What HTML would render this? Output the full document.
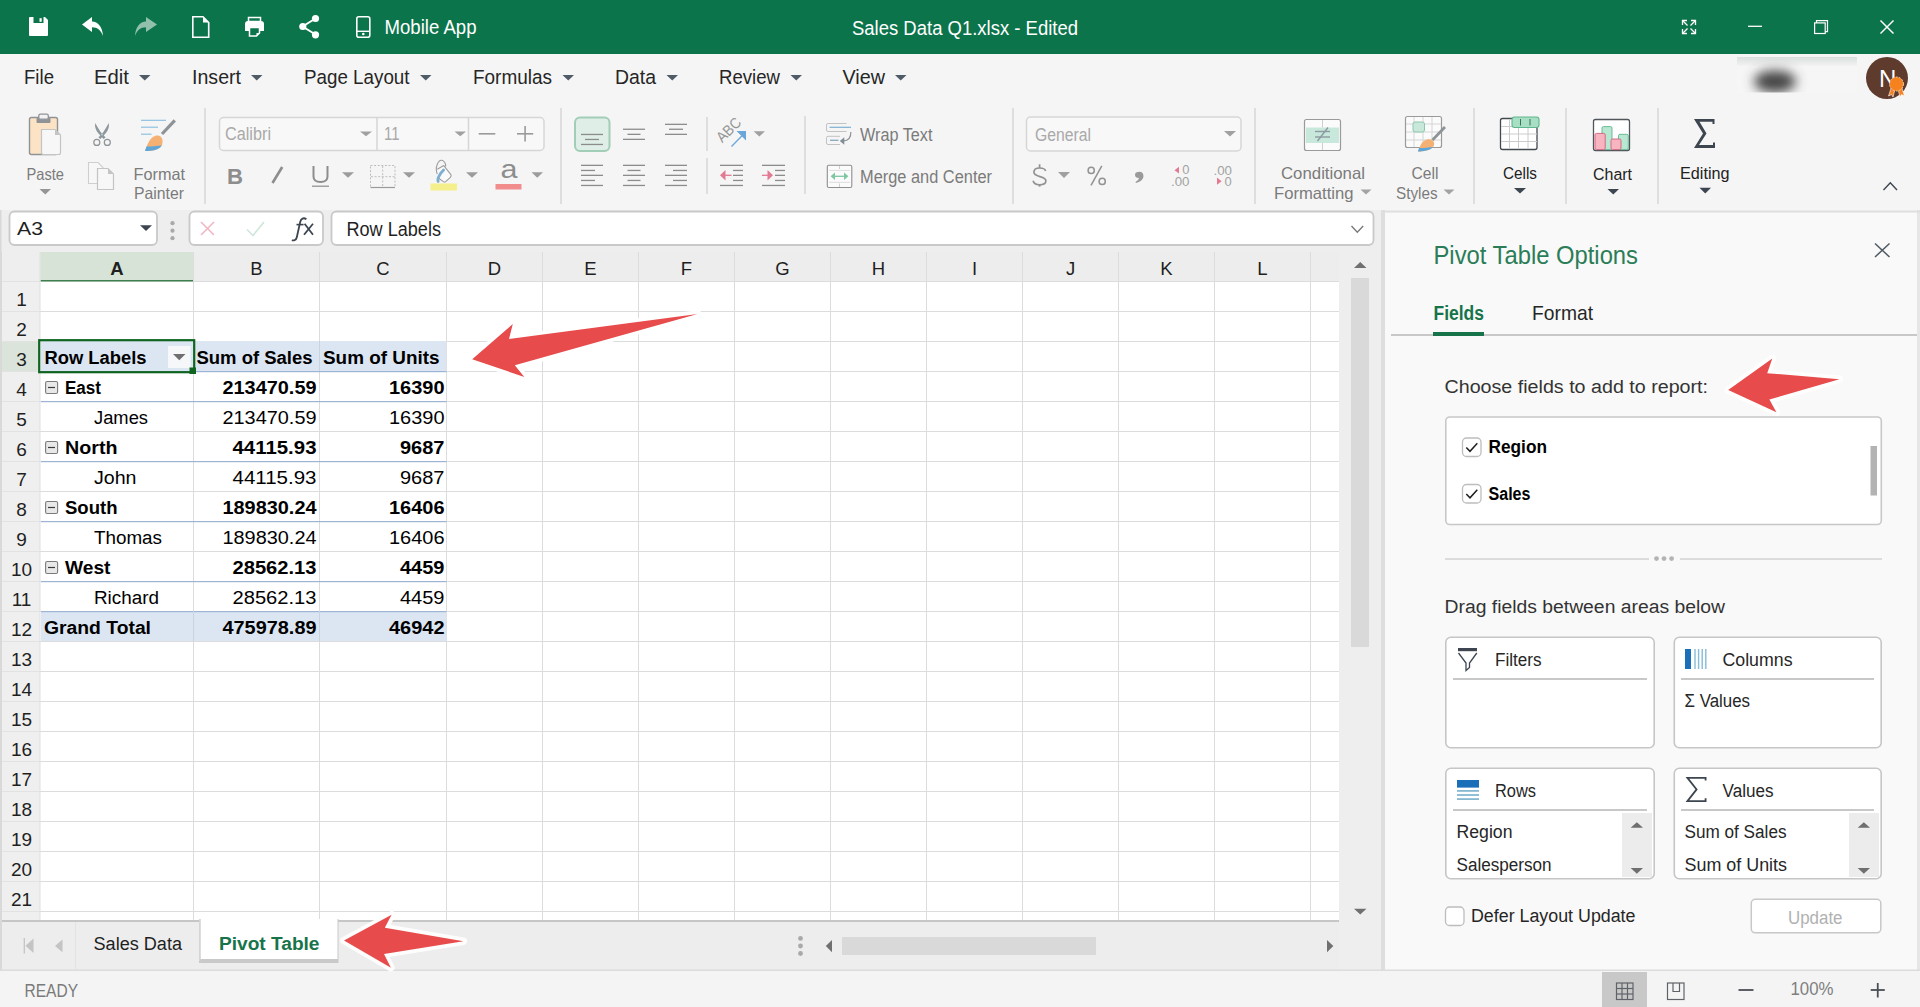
<!DOCTYPE html>
<html><head><meta charset="utf-8"><title>Sales Data Q1.xlsx - Edited</title>
<style>html,body{margin:0;padding:0;width:1920px;height:1007px;overflow:hidden;background:#f3f3f3}svg{display:block}</style>
</head><body>
<svg width="1920" height="1007" viewBox="0 0 1920 1007">
<defs><filter id="blur5" x="-50%" y="-80%" width="200%" height="260%"><feGaussianBlur stdDeviation="6"/></filter><linearGradient id="topstrip" x1="0" y1="0" x2="0" y2="1"><stop offset="0" stop-color="#d9e0dc"/><stop offset="1" stop-color="#f3f3f3"/></linearGradient><clipPath id="blobclip"><rect x="1737" y="57" width="120" height="35.5"/></clipPath></defs>
<rect x="0" y="0" width="1920" height="54" fill="#0c744b" />
<rect x="0" y="54" width="1920" height="156" fill="#f5f5f5" />
<rect x="0" y="210" width="1381" height="42" fill="#eeeeee" />
<rect x="0" y="252" width="1381" height="719" fill="#eeeeee" />
<rect x="0" y="971" width="1920" height="36" fill="#f4f4f4" />
<path d="M29,18 Q29,17 30,17 H45 L48,20 V35 Q48,36 47,36 H30 Q29,36 29,35 Z" fill="#ffffff" />
<rect x="33.5" y="17" width="10" height="6" fill="#0c744b" />
<rect x="39.5" y="18.2" width="2.2" height="3.6" fill="#ffffff" />
<path d="M92,17 L82,24.5 L92,32 V27.3 C97.5,27.3 101,30.5 103,36 C102.6,27 98,21.8 92,21.6 Z" fill="#ffffff" />
<path d="M146,17 L157,24.5 L146,32 V27.3 C140.5,27.3 137,30.5 135,36 C135.4,27 140,21.8 146,21.6 Z" fill="#ffffff" opacity="0.55"/>
<path d="M192.8,16.8 H203 L208.7,22.5 V37.2 H192.8 Z" fill="none" stroke="#ffffff" stroke-width="1.6" />
<path d="M203,16.8 V22.5 H208.7 Z" fill="#ffffff" />
<rect x="248.5" y="17.5" width="12" height="4" fill="none" stroke="#ffffff" stroke-width="1.5" />
<path d="M245,24 Q245,21 248,21 H261 Q264,21 264,24 V31 H260 V27 H249 V31 H245 Z" fill="#ffffff" />
<path d="M249.5,27.5 H259.5 V33 L256.5,36 H249.5 Z" fill="none" stroke="#ffffff" stroke-width="1.5" />
<path d="M259.5,33 H256.5 V36 Z" fill="#ffffff" />
<line x1="302.5" y1="26.5" x2="315.5" y2="18.5" stroke="#ffffff" stroke-width="2" />
<line x1="302.5" y1="26.5" x2="315.5" y2="34.5" stroke="#ffffff" stroke-width="2" />
<circle cx="315.5" cy="18.5" r="3.6" fill="#ffffff" />
<circle cx="302.8" cy="26.5" r="3.6" fill="#ffffff" />
<circle cx="315.5" cy="34.8" r="3.6" fill="#ffffff" />
<rect x="356.8" y="16.8" width="13" height="20.5" fill="none" rx="2" stroke="#ffffff" stroke-width="1.6" />
<circle cx="363.3" cy="34" r="1.3" fill="#ffffff" />
<line x1="357" y1="31.3" x2="370" y2="31.3" stroke="#ffffff" stroke-width="1.4" />
<text x="384.5" y="34.2" font-size="19.3" font-family="Liberation Sans" fill="#ffffff" textLength="92" lengthAdjust="spacingAndGlyphs" text-anchor="start" >Mobile App</text>
<text x="852" y="34.5" font-size="19.4" font-family="Liberation Sans" fill="#ffffff" textLength="226" lengthAdjust="spacingAndGlyphs" text-anchor="start" >Sales Data Q1.xlsx - Edited</text>
<line x1="1682.5" y1="20.5" x2="1687.5" y2="25.5" stroke="#ffffff" stroke-width="1.3" />
<path d="M1687.0,20.5 H1682.5 V25.0" fill="none" stroke="#ffffff" stroke-width="1.3" />
<line x1="1695.5" y1="20.5" x2="1690.5" y2="25.5" stroke="#ffffff" stroke-width="1.3" />
<path d="M1691.0,20.5 H1695.5 V25.0" fill="none" stroke="#ffffff" stroke-width="1.3" />
<line x1="1682.5" y1="33.5" x2="1687.5" y2="28.5" stroke="#ffffff" stroke-width="1.3" />
<path d="M1687.0,33.5 H1682.5 V29.0" fill="none" stroke="#ffffff" stroke-width="1.3" />
<line x1="1695.5" y1="33.5" x2="1690.5" y2="28.5" stroke="#ffffff" stroke-width="1.3" />
<path d="M1691.0,33.5 H1695.5 V29.0" fill="none" stroke="#ffffff" stroke-width="1.3" />
<line x1="1748" y1="26.3" x2="1762" y2="26.3" stroke="#ffffff" stroke-width="1.3" />
<rect x="1814.6" y="22.9" width="10.6" height="10.6" fill="none" stroke="#ffffff" stroke-width="1.2" />
<path d="M1816.5,22.9 V20.6 H1827.5 V31.6 H1825.2" fill="none" stroke="#ffffff" stroke-width="1.2" />
<line x1="1880.5" y1="20.5" x2="1893.5" y2="33.5" stroke="#ffffff" stroke-width="1.5" />
<line x1="1893.5" y1="20.5" x2="1880.5" y2="33.5" stroke="#ffffff" stroke-width="1.5" />
<text x="24" y="84" font-size="19.3" font-family="Liberation Sans" fill="#262626" textLength="30" lengthAdjust="spacingAndGlyphs" text-anchor="start" >File</text>
<text x="94" y="84" font-size="19.3" font-family="Liberation Sans" fill="#262626" textLength="35" lengthAdjust="spacingAndGlyphs" text-anchor="start" >Edit</text>
<path d="M139,75H150.5L144.75,80.6Z" fill="#4f5b66" />
<text x="192" y="84" font-size="19.3" font-family="Liberation Sans" fill="#262626" textLength="49" lengthAdjust="spacingAndGlyphs" text-anchor="start" >Insert</text>
<path d="M251,75H262.5L256.75,80.6Z" fill="#4f5b66" />
<text x="304" y="84" font-size="19.3" font-family="Liberation Sans" fill="#262626" textLength="105.5" lengthAdjust="spacingAndGlyphs" text-anchor="start" >Page Layout</text>
<path d="M420,75H431.5L425.75,80.6Z" fill="#4f5b66" />
<text x="473" y="84" font-size="19.3" font-family="Liberation Sans" fill="#262626" textLength="79" lengthAdjust="spacingAndGlyphs" text-anchor="start" >Formulas</text>
<path d="M562.5,75H574.0L568.25,80.6Z" fill="#4f5b66" />
<text x="615" y="84" font-size="19.3" font-family="Liberation Sans" fill="#262626" textLength="41" lengthAdjust="spacingAndGlyphs" text-anchor="start" >Data</text>
<path d="M666.5,75H678.0L672.25,80.6Z" fill="#4f5b66" />
<text x="719" y="84" font-size="19.3" font-family="Liberation Sans" fill="#262626" textLength="61" lengthAdjust="spacingAndGlyphs" text-anchor="start" >Review</text>
<path d="M790.5,75H802.0L796.25,80.6Z" fill="#4f5b66" />
<text x="842.5" y="84" font-size="19.3" font-family="Liberation Sans" fill="#262626" textLength="42.5" lengthAdjust="spacingAndGlyphs" text-anchor="start" >View</text>
<path d="M895,75H906.5L900.75,80.6Z" fill="#4f5b66" />
<rect x="1737" y="57" width="120" height="9" fill="url(#topstrip)" />
<rect x="1737" y="66" width="120" height="27" fill="#f6f6f6" />
<g clip-path="url(#blobclip)"><ellipse cx="1775" cy="81.5" rx="21" ry="11" fill="#444444" filter="url(#blur5)"/></g>
<circle cx="1887" cy="78" r="21" fill="#5e3b2d" />
<text x="1879" y="86.6" font-size="24" font-family="Liberation Sans" fill="#ffffff" text-anchor="start" >N</text>
<g transform="translate(1896.5,84)"><path d="M-5,3 L-8,12 L-5,10.5 L-3.5,13 L-1.5,5 Z M5,3 L8,12 L5,10.5 L3.5,13 L1.5,5 Z" fill="#f5821f" stroke="#fff" stroke-width="0.6"/><circle cx="0" cy="0" r="7" fill="#f5821f" stroke="#fde3c8" stroke-width="0.8" stroke-dasharray="2 1.2"/></g>
<rect x="29.5" y="117.5" width="28" height="37" fill="#fde3c5" rx="2" stroke="#8f9396" stroke-width="1.4" />
<rect x="36.5" y="118" width="14" height="5" fill="#8f9396" rx="1" />
<rect x="38.8" y="114.2" width="9.5" height="5" fill="#f3f3f3" rx="1.5" stroke="#8f9396" stroke-width="1.3" />
<path d="M41.5,129.5 H55 L60.5,135 V152.5 Q60.5,154.5 58.5,154.5 H43.5 Q41.5,154.5 41.5,152.5 Z" fill="#f7f7f7" stroke="#c4c4c4" stroke-width="1.2" />
<path d="M55,129.5 V135 H60.5 Z" fill="#c4c4c4" />
<text x="26.5" y="180" font-size="16.5" font-family="Liberation Sans" fill="#7b7b7b" textLength="37.5" lengthAdjust="spacingAndGlyphs" text-anchor="start" >Paste</text>
<path d="M39.5,189H51L45.25,194.6Z" fill="#959595" />
<path d="M95.2,123 Q94.3,128.5 98.3,133.3 L103.6,139 L105.6,137.4 L100.6,132 Q97.4,127 95.2,123 Z" fill="#8e979b" />
<path d="M108.8,123 Q109.7,128.5 105.7,133.3 L100.4,139 L98.4,137.4 L103.4,132 Q106.6,127 108.8,123 Z" fill="#8e979b" />
<circle cx="96.8" cy="142.4" r="3" fill="none" stroke="#8e9397" stroke-width="1.2" />
<circle cx="107.3" cy="142.4" r="3" fill="none" stroke="#8e9397" stroke-width="1.2" />
<circle cx="102" cy="134.6" r="1" fill="#b0cdd6" />
<path d="M88.5,162.5 H98 L103,167.5 V183.5 H88.5 Z" fill="#f7f7f7" stroke="#cfcfcf" stroke-width="1.1" />
<path d="M97.5,168.5 H108 L113.5,174 V189.5 H97.5 Z" fill="#f7f7f7" stroke="#c4c4c4" stroke-width="1.2" />
<path d="M108,168.5 V174 H113.5 Z" fill="#c4c4c4" />
<line x1="141" y1="120.3" x2="166" y2="120.3" stroke="#85bde0" stroke-width="1.1" />
<line x1="141" y1="127.2" x2="158" y2="127.2" stroke="#85bde0" stroke-width="1.1" />
<line x1="141" y1="134.2" x2="151.5" y2="134.2" stroke="#85bde0" stroke-width="1.1" />
<line x1="174.8" y1="120.3" x2="162" y2="134" stroke="#8e9397" stroke-width="3.2" />
<path d="M155,136 C161,134 164,139 162,145 C160,150 152,151 145,151 C147,146 149,138 155,136 Z" fill="#f5b173" />
<path d="M146.5,146.5 C151,146.5 157,146 161.8,145.5 C159,150 152,151 145,151 Z" fill="#5ea5d8" />
<text x="133.5" y="180" font-size="16.5" font-family="Liberation Sans" fill="#7b7b7b" textLength="51.5" lengthAdjust="spacingAndGlyphs" text-anchor="start" >Format</text>
<text x="134" y="199" font-size="16.5" font-family="Liberation Sans" fill="#7b7b7b" textLength="50" lengthAdjust="spacingAndGlyphs" text-anchor="start" >Painter</text>
<rect x="204.25" y="108" width="1.5" height="96" fill="#d6d6d6" />
<rect x="219.5" y="117.5" width="324.5" height="33" fill="#f8f8f8" rx="4" stroke="#d6d6d6" stroke-width="1.5" />
<line x1="377" y1="118" x2="377" y2="150" stroke="#d6d6d6" stroke-width="1.5" />
<line x1="468.5" y1="118" x2="468.5" y2="150" stroke="#d6d6d6" stroke-width="1.5" />
<text x="225" y="140" font-size="17.5" font-family="Liberation Sans" fill="#a9a9a9" textLength="46" lengthAdjust="spacingAndGlyphs" text-anchor="start" >Calibri</text>
<path d="M360,131.4H372L366.0,136.2Z" fill="#a0a0a0" />
<text x="384" y="140" font-size="17.5" font-family="Liberation Sans" fill="#a9a9a9" textLength="15.5" lengthAdjust="spacingAndGlyphs" text-anchor="start" >11</text>
<path d="M454.5,131.4H466L460.25,136.2Z" fill="#a0a0a0" />
<line x1="478.7" y1="133.8" x2="495.3" y2="133.8" stroke="#9a9a9a" stroke-width="1.6" />
<line x1="517" y1="133.8" x2="533.2" y2="133.8" stroke="#9a9a9a" stroke-width="1.6" />
<line x1="525.1" y1="126" x2="525.1" y2="141.6" stroke="#9a9a9a" stroke-width="1.6" />
<text x="227" y="184" font-size="22" font-family="Liberation Sans" fill="#8d8d8d" font-weight="bold" textLength="16" lengthAdjust="spacingAndGlyphs" text-anchor="start" >B</text>
<line x1="282.2" y1="167" x2="272.5" y2="183" stroke="#8d8d8d" stroke-width="2.6" />
<path d="M313.5,166 V176.5 Q313.5,182 320.5,182 Q327.5,182 327.5,176.5 V166" fill="none" stroke="#8d8d8d" stroke-width="2" />
<line x1="312" y1="186.2" x2="329" y2="186.2" stroke="#8d8d8d" stroke-width="1.2" />
<path d="M342,172.2H354L348.0,177.8Z" fill="#9c9c9c" />
<rect x="370.5" y="165.5" width="24.5" height="22" fill="none" stroke="#bdbdbd" stroke-width="1" stroke-dasharray="2 1.6"/>
<line x1="382.7" y1="166" x2="382.7" y2="187" stroke="#bdbdbd" stroke-width="1" stroke-dasharray="2 1.6"/>
<line x1="371" y1="176.7" x2="395" y2="176.7" stroke="#bdbdbd" stroke-width="1" stroke-dasharray="2 1.6"/>
<line x1="370.5" y1="187.5" x2="395" y2="187.5" stroke="#9a9a9a" stroke-width="1.2" />
<path d="M403,172.2H415L409.0,177.8Z" fill="#9c9c9c" />
<path d="M437.3,174 C434.5,167 438.5,159.5 442,160.3 C444.5,161 446,164 445.6,166.5" fill="none" stroke="#9d9d9d" stroke-width="1.1" />
<path d="M437.3,169.3 L443.8,165.6 L450.9,174.6 Q451.6,176 450.4,177.3 L445.6,181.6 Q444.6,182.4 443.4,181.6 L438.6,178.2" fill="#fafafa" stroke="#9d9d9d" stroke-width="1.1" stroke-linejoin="round"/>
<path d="M443.6,170 Q440,173.5 438.6,177 Q437.4,180.3 438.2,181.4" fill="none" stroke="#7eaed0" stroke-width="2.8" stroke-linecap="round"/>
<rect x="430.5" y="183.5" width="26.5" height="7" fill="#f5ef8c" />
<path d="M466,172.2H478L472.0,177.8Z" fill="#9c9c9c" />
<text x="500.5" y="178" font-size="26" font-family="Liberation Sans" fill="#8d8d8d" textLength="17" lengthAdjust="spacingAndGlyphs" text-anchor="start" >a</text>
<rect x="495.5" y="184" width="26" height="5.5" fill="#f18d8d" />
<path d="M531.5,172.2H543L537.25,177.8Z" fill="#9c9c9c" />
<rect x="560.25" y="108" width="1.5" height="96" fill="#d6d6d6" />
<rect x="575" y="117.5" width="34.5" height="33.5" fill="#dfeee6" rx="5" stroke="#a2cdb6" stroke-width="2" />
<rect x="581" y="133.8" width="22" height="1.3" fill="#8c8c8c" />
<rect x="585" y="138.8" width="14" height="1.3" fill="#8c8c8c" />
<rect x="581" y="143.8" width="22" height="1.3" fill="#8c8c8c" />
<rect x="623" y="128.6" width="22" height="1.3" fill="#8c8c8c" />
<rect x="627.5" y="133.70000000000002" width="13.0" height="1.3" fill="#8c8c8c" />
<rect x="623" y="138.70000000000002" width="22" height="1.3" fill="#8c8c8c" />
<rect x="665" y="123.7" width="22" height="1.3" fill="#8c8c8c" />
<rect x="669" y="128.6" width="14" height="1.3" fill="#8c8c8c" />
<rect x="665" y="133.70000000000002" width="22" height="1.3" fill="#8c8c8c" />
<rect x="581" y="164.70000000000002" width="22" height="1.3" fill="#8c8c8c" />
<rect x="623" y="164.70000000000002" width="22" height="1.3" fill="#8c8c8c" />
<rect x="665" y="164.70000000000002" width="22" height="1.3" fill="#8c8c8c" />
<rect x="581" y="169.8" width="14" height="1.3" fill="#8c8c8c" />
<rect x="627.5" y="169.8" width="13.0" height="1.3" fill="#8c8c8c" />
<rect x="673" y="169.8" width="14" height="1.3" fill="#8c8c8c" />
<rect x="581" y="174.70000000000002" width="22" height="1.3" fill="#8c8c8c" />
<rect x="623" y="174.70000000000002" width="22" height="1.3" fill="#8c8c8c" />
<rect x="665" y="174.70000000000002" width="22" height="1.3" fill="#8c8c8c" />
<rect x="581" y="179.8" width="14" height="1.3" fill="#8c8c8c" />
<rect x="627.5" y="179.8" width="13.0" height="1.3" fill="#8c8c8c" />
<rect x="673" y="179.8" width="14" height="1.3" fill="#8c8c8c" />
<rect x="581" y="184.8" width="22" height="1.3" fill="#8c8c8c" />
<rect x="623" y="184.8" width="22" height="1.3" fill="#8c8c8c" />
<rect x="665" y="184.8" width="22" height="1.3" fill="#8c8c8c" />
<rect x="706.25" y="117" width="1.5" height="34" fill="#d6d6d6" />
<rect x="706.25" y="158" width="1.5" height="36" fill="#d6d6d6" />
<text x="0" y="0" font-size="15" font-family="Liberation Sans" fill="#959595" transform="translate(722.3,143.3) rotate(-45)" textLength="28" lengthAdjust="spacingAndGlyphs">ABC</text>
<line x1="731.5" y1="146.5" x2="744" y2="133.8" stroke="#6aa7d8" stroke-width="1.3" />
<path d="M736.5,131 H746 V140.5 Z" fill="#6aa7d8" />
<path d="M753.6,131.2H765L759.3,136.5Z" fill="#a0a0a0" />
<rect x="720" y="164.70000000000002" width="23" height="1.3" fill="#8c8c8c" />
<rect x="720" y="184.8" width="23" height="1.3" fill="#8c8c8c" />
<rect x="733" y="169.8" width="10" height="1.3" fill="#8c8c8c" />
<rect x="733" y="174.70000000000002" width="10" height="1.3" fill="#8c8c8c" />
<rect x="733" y="179.8" width="10" height="1.3" fill="#8c8c8c" />
<rect x="762" y="164.70000000000002" width="23" height="1.3" fill="#8c8c8c" />
<rect x="762" y="184.8" width="23" height="1.3" fill="#8c8c8c" />
<rect x="775" y="169.8" width="10" height="1.3" fill="#8c8c8c" />
<rect x="775" y="174.70000000000002" width="10" height="1.3" fill="#8c8c8c" />
<rect x="775" y="179.8" width="10" height="1.3" fill="#8c8c8c" />
<path d="M720,175.3 L725.5,170 V180.6 Z" fill="#e27a93" />
<line x1="724" y1="175.3" x2="731.5" y2="175.3" stroke="#e27a93" stroke-width="1.3" />
<path d="M773,175.3 L767.5,170 V180.6 Z" fill="#e27a93" />
<line x1="762" y1="175.3" x2="769" y2="175.3" stroke="#e27a93" stroke-width="1.3" />
<rect x="804.25" y="116" width="1.5" height="78" fill="#d6d6d6" />
<path d="M846.5,123.5 H828 Q826.5,123.5 826.5,125 V130 Q826.5,131.5 828,131.5 H846.5" fill="none" stroke="#c2c2c2" stroke-width="1" />
<line x1="829.5" y1="127.3" x2="851" y2="127.3" stroke="#7fb0d3" stroke-width="1.2" />
<path d="M840,136.3 H828 Q826.5,136.3 826.5,137.8 V143 Q826.5,144.5 828,144.5 H840" fill="none" stroke="#c2c2c2" stroke-width="1" />
<line x1="830" y1="140.3" x2="838.5" y2="140.3" stroke="#86a9bf" stroke-width="1.3" />
<path d="M850.8,132 Q851.2,140.5 843.2,141" fill="none" stroke="#8e9397" stroke-width="1.2" />
<path d="M844.3,137.3 L839.8,141 L844.3,144.8 Z" fill="#7f8d97" />
<text x="860" y="141.2" font-size="17.5" font-family="Liberation Sans" fill="#7b7b7b" textLength="72.5" lengthAdjust="spacingAndGlyphs" text-anchor="start" >Wrap Text</text>
<rect x="827.3" y="165.3" width="24.5" height="22.2" fill="#fbfbfb" rx="1.5" stroke="#8f8f8f" stroke-width="1.1" />
<line x1="829" y1="170.4" x2="850" y2="170.4" stroke="#dedede" stroke-width="1" />
<line x1="829" y1="182.3" x2="850" y2="182.3" stroke="#dedede" stroke-width="1" />
<line x1="839.5" y1="166" x2="839.5" y2="169" stroke="#d0d0d0" stroke-width="1" />
<line x1="839.5" y1="183.5" x2="839.5" y2="187" stroke="#d0d0d0" stroke-width="1" />
<line x1="833" y1="176.3" x2="846" y2="176.3" stroke="#7fc6a2" stroke-width="1.3" />
<path d="M830.6,176.3 L835,172.6 V180 Z" fill="#7fc6a2" />
<path d="M848.4,176.3 L844,172.6 V180 Z" fill="#7fc6a2" />
<text x="860" y="183.2" font-size="17.5" font-family="Liberation Sans" fill="#7b7b7b" textLength="132" lengthAdjust="spacingAndGlyphs" text-anchor="start" >Merge and Center</text>
<rect x="1012.25" y="108" width="1.5" height="96" fill="#d6d6d6" />
<rect x="1026.5" y="117" width="214.5" height="34" fill="#f8f8f8" rx="4" stroke="#d6d6d6" stroke-width="1.5" />
<text x="1035" y="141.2" font-size="17.5" font-family="Liberation Sans" fill="#a9a9a9" textLength="56" lengthAdjust="spacingAndGlyphs" text-anchor="start" >General</text>
<path d="M1224,131H1236L1230.0,136.4Z" fill="#a0a0a0" />
<path d="M1045.6,171 C1045.1,168.9 1042.9,168 1039.6,168 C1036.1,168 1033.9,169.8 1033.9,172.3 C1033.9,177.4 1045.9,175.8 1045.9,180.8 C1045.9,183.3 1043.5,184.8 1039.6,184.8 C1036.1,184.8 1033.7,183.3 1033.1,180.8" fill="none" stroke="#929292" stroke-width="1.7" />
<line x1="1039.6" y1="164.3" x2="1039.6" y2="168" stroke="#929292" stroke-width="1.7" />
<line x1="1039.6" y1="184.8" x2="1039.6" y2="186.7" stroke="#929292" stroke-width="1.7" />
<path d="M1058,172H1070L1064.0,177.9Z" fill="#a0a0a0" />
<circle cx="1091.2" cy="170.4" r="3.1" fill="none" stroke="#929292" stroke-width="1.5" />
<circle cx="1102.2" cy="181.4" r="3.1" fill="none" stroke="#929292" stroke-width="1.5" />
<line x1="1101.8" y1="165.8" x2="1091" y2="185.4" stroke="#929292" stroke-width="1.5" />
<path d="M1138,172 Q1143,171 1143.5,176 Q1143.5,181 1136,183 L1135.5,182 Q1139,180 1139,178 Q1135,178 1135,175 Q1135,172 1138,172 Z" fill="#9a9a9a" />
<path d="M1174.5,170.2 L1179,166.8 V173.6 Z" fill="#e27a93" />
<text x="1182.3" y="174.3" font-size="12.5" font-family="Liberation Sans" fill="#a3a3a3" textLength="7.2" lengthAdjust="spacingAndGlyphs" text-anchor="start" >0</text>
<text x="1171" y="186" font-size="12.5" font-family="Liberation Sans" fill="#a3a3a3" textLength="18.5" lengthAdjust="spacingAndGlyphs" text-anchor="start" >.00</text>
<text x="1213.5" y="174.5" font-size="12.5" font-family="Liberation Sans" fill="#a3a3a3" textLength="18.5" lengthAdjust="spacingAndGlyphs" text-anchor="start" >.00</text>
<path d="M1217,177.6 L1221.6,181.2 L1217,184.8 Z" fill="#e27a93" />
<text x="1224.5" y="186" font-size="12.5" font-family="Liberation Sans" fill="#a3a3a3" textLength="7.2" lengthAdjust="spacingAndGlyphs" text-anchor="start" >0</text>
<rect x="1254.25" y="108" width="1.5" height="96" fill="#d6d6d6" />
<rect x="1304.5" y="119.5" width="36" height="31" fill="#fbfbfb" rx="2" stroke="#9a9a9a" stroke-width="1.2" />
<rect x="1306" y="127.5" width="33" height="15.5" fill="#c9e8dc" />
<line x1="1322.5" y1="120" x2="1322.5" y2="127.5" stroke="#cfcfcf" stroke-width="1" />
<line x1="1322.5" y1="143" x2="1322.5" y2="150" stroke="#cfcfcf" stroke-width="1" />
<line x1="1315" y1="131.5" x2="1330" y2="131.5" stroke="#8c9ba0" stroke-width="1.4" />
<line x1="1315" y1="137" x2="1330" y2="137" stroke="#8c9ba0" stroke-width="1.4" />
<line x1="1328" y1="127.5" x2="1317.5" y2="141" stroke="#8c9ba0" stroke-width="1.4" />
<text x="1281" y="179.4" font-size="16.5" font-family="Liberation Sans" fill="#7b7b7b" textLength="84" lengthAdjust="spacingAndGlyphs" text-anchor="start" >Conditional</text>
<text x="1274" y="198.5" font-size="16.5" font-family="Liberation Sans" fill="#7b7b7b" textLength="79.5" lengthAdjust="spacingAndGlyphs" text-anchor="start" >Formatting</text>
<path d="M1360.5,189.6H1371.5L1366.0,194.4Z" fill="#a3a3a3" />
<rect x="1405.5" y="116.5" width="36" height="31" fill="#fbfbfb" rx="2" stroke="#9a9a9a" stroke-width="1.2" />
<line x1="1414" y1="117" x2="1414" y2="147" stroke="#d5d5d5" stroke-width="1" />
<line x1="1423" y1="117" x2="1423" y2="147" stroke="#d5d5d5" stroke-width="1" />
<line x1="1432" y1="117" x2="1432" y2="147" stroke="#d5d5d5" stroke-width="1" />
<line x1="1406" y1="124" x2="1441" y2="124" stroke="#d5d5d5" stroke-width="1" />
<line x1="1406" y1="132" x2="1441" y2="132" stroke="#d5d5d5" stroke-width="1" />
<line x1="1406" y1="140" x2="1441" y2="140" stroke="#d5d5d5" stroke-width="1" />
<rect x="1413" y="122" width="11.5" height="10" fill="#c9e8dc" rx="2" stroke="#8fc7ad" stroke-width="1" />
<line x1="1445" y1="127" x2="1432.5" y2="140" stroke="#8e9397" stroke-width="2.8" />
<path d="M1427,139.5 C1433,138 1436,143 1433,147 C1430,150.5 1423,151.5 1418,151.5 C1420,147 1421,141 1427,139.5 Z" fill="#f5b173" />
<path d="M1419,148 C1424,148 1429,147.5 1433,147 C1430,150.5 1423,151.5 1418,151.5 Z" fill="#5ea5d8" />
<text x="1411.5" y="179.4" font-size="16.5" font-family="Liberation Sans" fill="#7b7b7b" textLength="27" lengthAdjust="spacingAndGlyphs" text-anchor="start" >Cell</text>
<text x="1396" y="198.5" font-size="16.5" font-family="Liberation Sans" fill="#7b7b7b" textLength="41.5" lengthAdjust="spacingAndGlyphs" text-anchor="start" >Styles</text>
<path d="M1443.5,189.6H1454.5L1449.0,194.4Z" fill="#a3a3a3" />
<rect x="1473.25" y="108" width="1.5" height="96" fill="#d6d6d6" />
<rect x="1500.5" y="118.5" width="36.5" height="31" fill="#ffffff" rx="2" stroke="#444a50" stroke-width="1.3" />
<line x1="1509.5" y1="119" x2="1509.5" y2="149" stroke="#cccccc" stroke-width="1" />
<line x1="1518.5" y1="119" x2="1518.5" y2="149" stroke="#cccccc" stroke-width="1" />
<line x1="1528" y1="119" x2="1528" y2="149" stroke="#cccccc" stroke-width="1" />
<line x1="1501" y1="126.5" x2="1537" y2="126.5" stroke="#cccccc" stroke-width="1" />
<line x1="1501" y1="134" x2="1537" y2="134" stroke="#cccccc" stroke-width="1" />
<line x1="1501" y1="141.5" x2="1537" y2="141.5" stroke="#cccccc" stroke-width="1" />
<rect x="1512" y="117" width="27" height="10.5" fill="#a6dfc3" rx="2.5" stroke="#5fb58d" stroke-width="1.1" />
<line x1="1520.5" y1="119" x2="1520.5" y2="125.5" stroke="#3e6f57" stroke-width="1" />
<line x1="1530" y1="119" x2="1530" y2="125.5" stroke="#3e6f57" stroke-width="1" />
<text x="1503" y="178.6" font-size="16.8" font-family="Liberation Sans" fill="#222222" textLength="34" lengthAdjust="spacingAndGlyphs" text-anchor="start" >Cells</text>
<path d="M1514,188H1526L1520.0,193.6Z" fill="#3d4650" />
<rect x="1565.25" y="108" width="1.5" height="96" fill="#d6d6d6" />
<rect x="1593.5" y="119.5" width="36" height="31" fill="#ffffff" rx="2" stroke="#50565b" stroke-width="1.3" />
<rect x="1602" y="126.6" width="10" height="23" fill="#b8e8d2" rx="1.5" stroke="#5fb58d" stroke-width="0.9" />
<rect x="1618.5" y="134.3" width="9.8" height="15.3" fill="#b8e8d2" rx="1.5" stroke="#5fb58d" stroke-width="0.9" />
<rect x="1595" y="133.4" width="10.2" height="16.2" fill="#f8b4c0" rx="1.5" stroke="#d0607a" stroke-width="0.9" />
<rect x="1611" y="139" width="10" height="10.6" fill="#f8b4c0" rx="1.5" stroke="#d0607a" stroke-width="0.9" />
<text x="1593" y="180" font-size="16.8" font-family="Liberation Sans" fill="#222222" textLength="39" lengthAdjust="spacingAndGlyphs" text-anchor="start" >Chart</text>
<path d="M1607.5,189H1619L1613.25,194.4Z" fill="#3d4650" />
<rect x="1657.25" y="108" width="1.5" height="96" fill="#d6d6d6" />
<path d="M1694,119 H1714.5 V124 H1712.5 V121.8 H1699.5 L1706.5,133.5 L1699,145 H1713 V142.5 H1715 V148 H1694 L1703,133.5 Z" fill="#3d4650" />
<text x="1680" y="179" font-size="16.8" font-family="Liberation Sans" fill="#222222" textLength="49.5" lengthAdjust="spacingAndGlyphs" text-anchor="start" >Editing</text>
<path d="M1699.5,187.7H1711L1705.25,193.5Z" fill="#3d4650" />
<path d="M1883.5,190 L1890.3,182.8 L1897,190" fill="none" stroke="#3d4650" stroke-width="1.4" />
<rect x="9.5" y="211.5" width="147.5" height="33.5" fill="#ffffff" rx="5" stroke="#c9c9c9" stroke-width="1.8" />
<text x="17" y="235.2" font-size="18.6" font-family="Liberation Sans" fill="#1f1f1f" textLength="26" lengthAdjust="spacingAndGlyphs" text-anchor="start" >A3</text>
<path d="M140,225.3H152L146.0,231Z" fill="#3d4650" />
<circle cx="172.5" cy="223.2" r="2.1" fill="#a9a9a9" />
<circle cx="172.5" cy="230.7" r="2.1" fill="#a9a9a9" />
<circle cx="172.5" cy="238.2" r="2.1" fill="#a9a9a9" />
<rect x="189.5" y="211.5" width="133.5" height="33.5" fill="#ffffff" rx="5" stroke="#c9c9c9" stroke-width="1.8" />
<line x1="201" y1="222" x2="214" y2="235" stroke="#f2b6c2" stroke-width="1.6" />
<line x1="214" y1="222" x2="201" y2="235" stroke="#f2b6c2" stroke-width="1.6" />
<path d="M247,229.5 L253,235.5 L264,222" fill="none" stroke="#cfe7da" stroke-width="1.6" />
<path d="M306.4,219.2 C303.5,217.2 300.9,218.6 300.2,222 L296.8,237.2 C296.2,240 294,240.8 291.8,240.3" fill="none" stroke="#3d4650" stroke-width="1.8" />
<line x1="296.5" y1="224.6" x2="303.6" y2="224.6" stroke="#3d4650" stroke-width="1.6" />
<line x1="304.6" y1="223.8" x2="313" y2="234.8" stroke="#3d4650" stroke-width="1.8" />
<line x1="313" y1="223.8" x2="304" y2="234.8" stroke="#3d4650" stroke-width="1.8" />
<rect x="331.5" y="211.5" width="1042" height="33.5" fill="#ffffff" rx="5" stroke="#c9c9c9" stroke-width="1.8" />
<text x="346.5" y="236" font-size="19.4" font-family="Liberation Sans" fill="#1f1f1f" textLength="94.5" lengthAdjust="spacingAndGlyphs" text-anchor="start" >Row Labels</text>
<path d="M1351.5,226 L1357.3,232.2 L1363.2,226" fill="none" stroke="#7a7a7a" stroke-width="1.4" />
<rect x="40" y="282" width="1299" height="638" fill="#ffffff" />
<rect x="40" y="252" width="1299" height="29" fill="#ededed" />
<rect x="40.5" y="252" width="152.5" height="29" fill="#d6e3d6" />
<rect x="40.5" y="280" width="152.5" height="1.5" fill="#3c7f4c" />
<rect x="193" y="252" width="1" height="668" fill="#dcdcdc" />
<rect x="319" y="252" width="1" height="668" fill="#dcdcdc" />
<rect x="446" y="252" width="1" height="668" fill="#dcdcdc" />
<rect x="542" y="252" width="1" height="668" fill="#dcdcdc" />
<rect x="638" y="252" width="1" height="668" fill="#dcdcdc" />
<rect x="734" y="252" width="1" height="668" fill="#dcdcdc" />
<rect x="830" y="252" width="1" height="668" fill="#dcdcdc" />
<rect x="926" y="252" width="1" height="668" fill="#dcdcdc" />
<rect x="1022" y="252" width="1" height="668" fill="#dcdcdc" />
<rect x="1118" y="252" width="1" height="668" fill="#dcdcdc" />
<rect x="1214" y="252" width="1" height="668" fill="#dcdcdc" />
<rect x="1310" y="252" width="1" height="668" fill="#dcdcdc" />
<rect x="193.5" y="281" width="1145.5" height="1" fill="#dcdcdc" />
<rect x="40" y="311" width="1299" height="1" fill="#dcdcdc" />
<rect x="40" y="341" width="1299" height="1" fill="#dcdcdc" />
<rect x="40" y="371" width="1299" height="1" fill="#dcdcdc" />
<rect x="40" y="401" width="1299" height="1" fill="#dcdcdc" />
<rect x="40" y="431" width="1299" height="1" fill="#dcdcdc" />
<rect x="40" y="461" width="1299" height="1" fill="#dcdcdc" />
<rect x="40" y="491" width="1299" height="1" fill="#dcdcdc" />
<rect x="40" y="521" width="1299" height="1" fill="#dcdcdc" />
<rect x="40" y="551" width="1299" height="1" fill="#dcdcdc" />
<rect x="40" y="581" width="1299" height="1" fill="#dcdcdc" />
<rect x="40" y="611" width="1299" height="1" fill="#dcdcdc" />
<rect x="40" y="641" width="1299" height="1" fill="#dcdcdc" />
<rect x="40" y="671" width="1299" height="1" fill="#dcdcdc" />
<rect x="40" y="701" width="1299" height="1" fill="#dcdcdc" />
<rect x="40" y="731" width="1299" height="1" fill="#dcdcdc" />
<rect x="40" y="761" width="1299" height="1" fill="#dcdcdc" />
<rect x="40" y="791" width="1299" height="1" fill="#dcdcdc" />
<rect x="40" y="821" width="1299" height="1" fill="#dcdcdc" />
<rect x="40" y="851" width="1299" height="1" fill="#dcdcdc" />
<rect x="40" y="881" width="1299" height="1" fill="#dcdcdc" />
<rect x="40" y="911" width="1299" height="1" fill="#dcdcdc" />
<rect x="41" y="341" width="405.5" height="30" fill="#dce6f2" />
<rect x="41" y="611" width="405.5" height="30" fill="#dce6f2" />
<rect x="41" y="371" width="405.5" height="1.2" fill="#9db4d4" />
<rect x="41" y="401" width="405.5" height="1.2" fill="#9db4d4" />
<rect x="41" y="461" width="405.5" height="1.2" fill="#9db4d4" />
<rect x="41" y="521" width="405.5" height="1.2" fill="#9db4d4" />
<rect x="41" y="581" width="405.5" height="1.2" fill="#9db4d4" />
<rect x="41" y="611" width="405.5" height="1.2" fill="#9db4d4" />
<rect x="193" y="341" width="1" height="30" fill="#c9d3e0" />
<rect x="193" y="611" width="1" height="30" fill="#c9d3e0" />
<rect x="319" y="341" width="1" height="30" fill="#c9d3e0" />
<rect x="319" y="611" width="1" height="30" fill="#c9d3e0" />
<text x="117.0" y="275.3" font-size="18.5" font-family="Liberation Sans" fill="#1f1f1f" font-weight="bold" text-anchor="middle" >A</text>
<text x="256.5" y="275.3" font-size="18.5" font-family="Liberation Sans" fill="#1f1f1f" text-anchor="middle" >B</text>
<text x="383.0" y="275.3" font-size="18.5" font-family="Liberation Sans" fill="#1f1f1f" text-anchor="middle" >C</text>
<text x="494.5" y="275.3" font-size="18.5" font-family="Liberation Sans" fill="#1f1f1f" text-anchor="middle" >D</text>
<text x="590.5" y="275.3" font-size="18.5" font-family="Liberation Sans" fill="#1f1f1f" text-anchor="middle" >E</text>
<text x="686.5" y="275.3" font-size="18.5" font-family="Liberation Sans" fill="#1f1f1f" text-anchor="middle" >F</text>
<text x="782.5" y="275.3" font-size="18.5" font-family="Liberation Sans" fill="#1f1f1f" text-anchor="middle" >G</text>
<text x="878.5" y="275.3" font-size="18.5" font-family="Liberation Sans" fill="#1f1f1f" text-anchor="middle" >H</text>
<text x="974.5" y="275.3" font-size="18.5" font-family="Liberation Sans" fill="#1f1f1f" text-anchor="middle" >I</text>
<text x="1070.5" y="275.3" font-size="18.5" font-family="Liberation Sans" fill="#1f1f1f" text-anchor="middle" >J</text>
<text x="1166.5" y="275.3" font-size="18.5" font-family="Liberation Sans" fill="#1f1f1f" text-anchor="middle" >K</text>
<text x="1262.5" y="275.3" font-size="18.5" font-family="Liberation Sans" fill="#1f1f1f" text-anchor="middle" >L</text>
<rect x="0" y="282" width="40" height="638" fill="#efefef" />
<rect x="2" y="341" width="36" height="30" fill="#dae4da" />
<rect x="0" y="210" width="1.5" height="761" fill="#d8d8d8" />
<text x="21.5" y="306" font-size="19" font-family="Liberation Sans" fill="#1f1f1f" text-anchor="middle" >1</text>
<text x="21.5" y="336" font-size="19" font-family="Liberation Sans" fill="#1f1f1f" text-anchor="middle" >2</text>
<text x="21.5" y="366" font-size="19" font-family="Liberation Sans" fill="#1f1f1f" text-anchor="middle" >3</text>
<text x="21.5" y="396" font-size="19" font-family="Liberation Sans" fill="#1f1f1f" text-anchor="middle" >4</text>
<text x="21.5" y="426" font-size="19" font-family="Liberation Sans" fill="#1f1f1f" text-anchor="middle" >5</text>
<text x="21.5" y="456" font-size="19" font-family="Liberation Sans" fill="#1f1f1f" text-anchor="middle" >6</text>
<text x="21.5" y="486" font-size="19" font-family="Liberation Sans" fill="#1f1f1f" text-anchor="middle" >7</text>
<text x="21.5" y="516" font-size="19" font-family="Liberation Sans" fill="#1f1f1f" text-anchor="middle" >8</text>
<text x="21.5" y="546" font-size="19" font-family="Liberation Sans" fill="#1f1f1f" text-anchor="middle" >9</text>
<text x="21.5" y="576" font-size="19" font-family="Liberation Sans" fill="#1f1f1f" text-anchor="middle" >10</text>
<text x="21.5" y="606" font-size="19" font-family="Liberation Sans" fill="#1f1f1f" text-anchor="middle" >11</text>
<text x="21.5" y="636" font-size="19" font-family="Liberation Sans" fill="#1f1f1f" text-anchor="middle" >12</text>
<text x="21.5" y="666" font-size="19" font-family="Liberation Sans" fill="#1f1f1f" text-anchor="middle" >13</text>
<text x="21.5" y="696" font-size="19" font-family="Liberation Sans" fill="#1f1f1f" text-anchor="middle" >14</text>
<text x="21.5" y="726" font-size="19" font-family="Liberation Sans" fill="#1f1f1f" text-anchor="middle" >15</text>
<text x="21.5" y="756" font-size="19" font-family="Liberation Sans" fill="#1f1f1f" text-anchor="middle" >16</text>
<text x="21.5" y="786" font-size="19" font-family="Liberation Sans" fill="#1f1f1f" text-anchor="middle" >17</text>
<text x="21.5" y="816" font-size="19" font-family="Liberation Sans" fill="#1f1f1f" text-anchor="middle" >18</text>
<text x="21.5" y="846" font-size="19" font-family="Liberation Sans" fill="#1f1f1f" text-anchor="middle" >19</text>
<text x="21.5" y="876" font-size="19" font-family="Liberation Sans" fill="#1f1f1f" text-anchor="middle" >20</text>
<text x="21.5" y="906" font-size="19" font-family="Liberation Sans" fill="#1f1f1f" text-anchor="middle" >21</text>
<rect x="2" y="281" width="38" height="1" fill="#e2e2e2" />
<rect x="2" y="311" width="38" height="1" fill="#e2e2e2" />
<rect x="2" y="341" width="38" height="1" fill="#e2e2e2" />
<rect x="2" y="371" width="38" height="1" fill="#e2e2e2" />
<rect x="2" y="401" width="38" height="1" fill="#e2e2e2" />
<rect x="2" y="431" width="38" height="1" fill="#e2e2e2" />
<rect x="2" y="461" width="38" height="1" fill="#e2e2e2" />
<rect x="2" y="491" width="38" height="1" fill="#e2e2e2" />
<rect x="2" y="521" width="38" height="1" fill="#e2e2e2" />
<rect x="2" y="551" width="38" height="1" fill="#e2e2e2" />
<rect x="2" y="581" width="38" height="1" fill="#e2e2e2" />
<rect x="2" y="611" width="38" height="1" fill="#e2e2e2" />
<rect x="2" y="641" width="38" height="1" fill="#e2e2e2" />
<rect x="2" y="671" width="38" height="1" fill="#e2e2e2" />
<rect x="2" y="701" width="38" height="1" fill="#e2e2e2" />
<rect x="2" y="731" width="38" height="1" fill="#e2e2e2" />
<rect x="2" y="761" width="38" height="1" fill="#e2e2e2" />
<rect x="2" y="791" width="38" height="1" fill="#e2e2e2" />
<rect x="2" y="821" width="38" height="1" fill="#e2e2e2" />
<rect x="2" y="851" width="38" height="1" fill="#e2e2e2" />
<rect x="2" y="881" width="38" height="1" fill="#e2e2e2" />
<rect x="2" y="911" width="38" height="1" fill="#e2e2e2" />
<rect x="39.5" y="252" width="1" height="668" fill="#e0e0e0" />
<text x="44.5" y="363.8" font-size="19.2" font-family="Liberation Sans" fill="#000000" font-weight="bold" textLength="102" lengthAdjust="spacingAndGlyphs" text-anchor="start" >Row Labels</text>
<rect x="168" y="346" width="22.5" height="22" fill="#f6f7f9" />
<path d="M173,354H185.5L179.25,360.3Z" fill="#6f6f6f" />
<text x="196.5" y="363.8" font-size="19.2" font-family="Liberation Sans" fill="#000000" font-weight="bold" textLength="116" lengthAdjust="spacingAndGlyphs" text-anchor="start" >Sum of Sales</text>
<text x="323" y="363.8" font-size="19.2" font-family="Liberation Sans" fill="#000000" font-weight="bold" textLength="116.5" lengthAdjust="spacingAndGlyphs" text-anchor="start" >Sum of Units</text>
<rect x="45.6" y="381.5" width="12" height="12" fill="#e8e8e8" rx="1.6" stroke="#7a7a7a" stroke-width="1.1" />
<rect x="48" y="386.9" width="7" height="1.2" fill="#3a3a3a" />
<text x="65" y="393.8" font-size="19.2" font-family="Liberation Sans" fill="#000000" font-weight="bold" textLength="36" lengthAdjust="spacingAndGlyphs" text-anchor="start" >East</text>
<text x="316.5" y="393.8" font-size="19.2" font-family="Liberation Sans" fill="#000000" font-weight="bold" textLength="94" lengthAdjust="spacingAndGlyphs" text-anchor="end" >213470.59</text>
<text x="444.5" y="393.8" font-size="19.2" font-family="Liberation Sans" fill="#000000" font-weight="bold" textLength="55.5" lengthAdjust="spacingAndGlyphs" text-anchor="end" >16390</text>
<text x="94" y="423.8" font-size="19.2" font-family="Liberation Sans" fill="#000000" textLength="54" lengthAdjust="spacingAndGlyphs" text-anchor="start" >James</text>
<text x="316.5" y="423.8" font-size="19.2" font-family="Liberation Sans" fill="#000000" textLength="94" lengthAdjust="spacingAndGlyphs" text-anchor="end" >213470.59</text>
<text x="444.5" y="423.8" font-size="19.2" font-family="Liberation Sans" fill="#000000" textLength="55.5" lengthAdjust="spacingAndGlyphs" text-anchor="end" >16390</text>
<rect x="45.6" y="441.5" width="12" height="12" fill="#e8e8e8" rx="1.6" stroke="#7a7a7a" stroke-width="1.1" />
<rect x="48" y="446.9" width="7" height="1.2" fill="#3a3a3a" />
<text x="65" y="453.8" font-size="19.2" font-family="Liberation Sans" fill="#000000" font-weight="bold" textLength="52.5" lengthAdjust="spacingAndGlyphs" text-anchor="start" >North</text>
<text x="316.5" y="453.8" font-size="19.2" font-family="Liberation Sans" fill="#000000" font-weight="bold" textLength="84" lengthAdjust="spacingAndGlyphs" text-anchor="end" >44115.93</text>
<text x="444.5" y="453.8" font-size="19.2" font-family="Liberation Sans" fill="#000000" font-weight="bold" textLength="44.5" lengthAdjust="spacingAndGlyphs" text-anchor="end" >9687</text>
<text x="94" y="483.8" font-size="19.2" font-family="Liberation Sans" fill="#000000" textLength="42.5" lengthAdjust="spacingAndGlyphs" text-anchor="start" >John</text>
<text x="316.5" y="483.8" font-size="19.2" font-family="Liberation Sans" fill="#000000" textLength="84" lengthAdjust="spacingAndGlyphs" text-anchor="end" >44115.93</text>
<text x="444.5" y="483.8" font-size="19.2" font-family="Liberation Sans" fill="#000000" textLength="44.5" lengthAdjust="spacingAndGlyphs" text-anchor="end" >9687</text>
<rect x="45.6" y="501.5" width="12" height="12" fill="#e8e8e8" rx="1.6" stroke="#7a7a7a" stroke-width="1.1" />
<rect x="48" y="506.9" width="7" height="1.2" fill="#3a3a3a" />
<text x="65" y="513.8" font-size="19.2" font-family="Liberation Sans" fill="#000000" font-weight="bold" textLength="52.5" lengthAdjust="spacingAndGlyphs" text-anchor="start" >South</text>
<text x="316.5" y="513.8" font-size="19.2" font-family="Liberation Sans" fill="#000000" font-weight="bold" textLength="94" lengthAdjust="spacingAndGlyphs" text-anchor="end" >189830.24</text>
<text x="444.5" y="513.8" font-size="19.2" font-family="Liberation Sans" fill="#000000" font-weight="bold" textLength="55.5" lengthAdjust="spacingAndGlyphs" text-anchor="end" >16406</text>
<text x="94" y="543.8" font-size="19.2" font-family="Liberation Sans" fill="#000000" textLength="68" lengthAdjust="spacingAndGlyphs" text-anchor="start" >Thomas</text>
<text x="316.5" y="543.8" font-size="19.2" font-family="Liberation Sans" fill="#000000" textLength="94" lengthAdjust="spacingAndGlyphs" text-anchor="end" >189830.24</text>
<text x="444.5" y="543.8" font-size="19.2" font-family="Liberation Sans" fill="#000000" textLength="55.5" lengthAdjust="spacingAndGlyphs" text-anchor="end" >16406</text>
<rect x="45.6" y="561.5" width="12" height="12" fill="#e8e8e8" rx="1.6" stroke="#7a7a7a" stroke-width="1.1" />
<rect x="48" y="566.9" width="7" height="1.2" fill="#3a3a3a" />
<text x="65" y="573.8" font-size="19.2" font-family="Liberation Sans" fill="#000000" font-weight="bold" textLength="45.5" lengthAdjust="spacingAndGlyphs" text-anchor="start" >West</text>
<text x="316.5" y="573.8" font-size="19.2" font-family="Liberation Sans" fill="#000000" font-weight="bold" textLength="84" lengthAdjust="spacingAndGlyphs" text-anchor="end" >28562.13</text>
<text x="444.5" y="573.8" font-size="19.2" font-family="Liberation Sans" fill="#000000" font-weight="bold" textLength="44.5" lengthAdjust="spacingAndGlyphs" text-anchor="end" >4459</text>
<text x="94" y="603.8" font-size="19.2" font-family="Liberation Sans" fill="#000000" textLength="65" lengthAdjust="spacingAndGlyphs" text-anchor="start" >Richard</text>
<text x="316.5" y="603.8" font-size="19.2" font-family="Liberation Sans" fill="#000000" textLength="84" lengthAdjust="spacingAndGlyphs" text-anchor="end" >28562.13</text>
<text x="444.5" y="603.8" font-size="19.2" font-family="Liberation Sans" fill="#000000" textLength="44.5" lengthAdjust="spacingAndGlyphs" text-anchor="end" >4459</text>
<text x="44" y="633.8" font-size="19.2" font-family="Liberation Sans" fill="#000000" font-weight="bold" textLength="107" lengthAdjust="spacingAndGlyphs" text-anchor="start" >Grand Total</text>
<text x="316.5" y="633.8" font-size="19.2" font-family="Liberation Sans" fill="#000000" font-weight="bold" textLength="94" lengthAdjust="spacingAndGlyphs" text-anchor="end" >475978.89</text>
<text x="444.5" y="633.8" font-size="19.2" font-family="Liberation Sans" fill="#000000" font-weight="bold" textLength="55.5" lengthAdjust="spacingAndGlyphs" text-anchor="end" >46942</text>
<rect x="39.2" y="340.2" width="155" height="32" fill="none" stroke="#0f6420" stroke-width="2.2" />
<rect x="189.5" y="367.5" width="6.5" height="6.5" fill="#0f6420" />
<rect x="1339" y="252" width="42" height="719" fill="#eeeeee" />
<path d="M1354,268H1366.5L1360.25,262Z" fill="#707070" />
<rect x="1351" y="278" width="18" height="369" fill="#d9d9d9" />
<path d="M1354,908.7H1366.5L1360.25,914.5Z" fill="#707070" />
<rect x="0" y="920" width="1339" height="51" fill="#ededed" />
<rect x="0" y="920" width="1339" height="2" fill="#c6c6c6" />
<rect x="0" y="252" width="2" height="719" fill="#d9d9d9" />
<rect x="0" y="969.5" width="1381" height="1.5" fill="#dcdcdc" />
<path d="M24.3,938 V953.5" fill="none" stroke="#c4c4c4" stroke-width="1.3" />
<path d="M33.5,938.5 V953 L25.5,945.7 Z" fill="#c4c4c4" />
<path d="M62.5,939.5 V952.3 L55,945.9 Z" fill="#c4c4c4" />
<rect x="75" y="922" width="1" height="48" fill="#e3e3e3" />
<text x="93.5" y="949.5" font-size="19.2" font-family="Liberation Sans" fill="#1f1f1f" textLength="88.5" lengthAdjust="spacingAndGlyphs" text-anchor="start" >Sales Data</text>
<rect x="199" y="919" width="139.5" height="44" fill="#c9c9c9" />
<rect x="200.5" y="919" width="137" height="40" fill="#ffffff" />
<rect x="199" y="919" width="1.5" height="42" fill="#d5d5d5" />
<text x="219" y="949.6" font-size="19.2" font-family="Liberation Sans" fill="#17744a" font-weight="bold" textLength="100.5" lengthAdjust="spacingAndGlyphs" text-anchor="start" >Pivot Table</text>
<circle cx="800.5" cy="938.4" r="2.4" fill="#a9a9a9" />
<circle cx="800.5" cy="946" r="2.4" fill="#a9a9a9" />
<circle cx="800.5" cy="953.5" r="2.4" fill="#a9a9a9" />
<path d="M832,939.9 V952.3 L825.8,946.1 Z" fill="#707070" />
<rect x="842" y="937" width="254" height="18" fill="#d9d9d9" />
<path d="M1327,939.9 V952.3 L1333.3,946.1 Z" fill="#707070" />
<text x="24.5" y="996.7" font-size="17.5" font-family="Liberation Sans" fill="#7a7a7a" textLength="53.5" lengthAdjust="spacingAndGlyphs" text-anchor="start" >READY</text>
<rect x="1602" y="972" width="45" height="35" fill="#c8c8c8" />
<rect x="1616.5" y="983" width="16.5" height="16.5" fill="none" stroke="#5f6368" stroke-width="1.2" />
<line x1="1622.0" y1="983" x2="1622.0" y2="999.5" stroke="#5f6368" stroke-width="1.2" />
<line x1="1616.5" y1="988.5" x2="1633" y2="988.5" stroke="#5f6368" stroke-width="1.2" />
<line x1="1627.5" y1="983" x2="1627.5" y2="999.5" stroke="#5f6368" stroke-width="1.2" />
<line x1="1616.5" y1="994.0" x2="1633" y2="994.0" stroke="#5f6368" stroke-width="1.2" />
<rect x="1667.5" y="983" width="16.5" height="16.5" fill="none" stroke="#5f6368" stroke-width="1.2" />
<path d="M1673,983 V991.5 H1679.5 V983" fill="none" stroke="#5f6368" stroke-width="1.2" />
<line x1="1738.5" y1="990" x2="1753.5" y2="990" stroke="#4a4f55" stroke-width="1.8" />
<text x="1790.5" y="995.3" font-size="17.5" font-family="Liberation Sans" fill="#7f7f7f" textLength="43" lengthAdjust="spacingAndGlyphs" text-anchor="start" >100%</text>
<line x1="1870.7" y1="990" x2="1884.8" y2="990" stroke="#4a4f55" stroke-width="1.8" />
<line x1="1877.75" y1="983" x2="1877.75" y2="997.5" stroke="#4a4f55" stroke-width="1.8" />
<rect x="1381" y="210" width="539" height="761" fill="#f9f9f9" />
<rect x="1381" y="210" width="4" height="761" fill="#dedede" />
<rect x="1917" y="210" width="3" height="761" fill="#e6e6e6" />
<rect x="1381" y="210.5" width="539" height="2" fill="#dedede" />
<rect x="1381" y="969.5" width="539" height="1.5" fill="#dcdcdc" />
<text x="1433.5" y="264.4" font-size="26.5" font-family="Liberation Sans" fill="#2b7d58" textLength="204.5" lengthAdjust="spacingAndGlyphs" text-anchor="start" >Pivot Table Options</text>
<line x1="1875" y1="243.5" x2="1889.5" y2="257" stroke="#4f5a63" stroke-width="1.5" />
<line x1="1889.5" y1="243.5" x2="1875" y2="257" stroke="#4f5a63" stroke-width="1.5" />
<text x="1433.5" y="320" font-size="20.3" font-family="Liberation Sans" fill="#17744a" font-weight="bold" textLength="50.5" lengthAdjust="spacingAndGlyphs" text-anchor="start" >Fields</text>
<text x="1532" y="320" font-size="20.3" font-family="Liberation Sans" fill="#262626" textLength="61" lengthAdjust="spacingAndGlyphs" text-anchor="start" >Format</text>
<rect x="1391" y="334" width="526" height="2" fill="#c8c8c8" />
<rect x="1433" y="332" width="51" height="4" fill="#17744a" />
<text x="1444.5" y="392.6" font-size="18.8" font-family="Liberation Sans" fill="#333333" textLength="263.5" lengthAdjust="spacingAndGlyphs" text-anchor="start" >Choose fields to add to report:</text>
<rect x="1445.8" y="417" width="435.5" height="107.5" fill="#ffffff" rx="4" stroke="#c8c8c8" stroke-width="1.6" />
<rect x="1462.5" y="438" width="18.5" height="18.5" fill="#ffffff" rx="4" stroke="#bdbdbd" stroke-width="1.3" />
<path d="M1466.3,447.5 L1470,451.3 L1477.3,443.3" fill="none" stroke="#1f1f1f" stroke-width="1.5" />
<rect x="1462.5" y="484.5" width="18.5" height="18.5" fill="#ffffff" rx="4" stroke="#bdbdbd" stroke-width="1.3" />
<path d="M1466.3,494.0 L1470,497.8 L1477.3,489.8" fill="none" stroke="#1f1f1f" stroke-width="1.5" />
<text x="1488.5" y="452.5" font-size="18" font-family="Liberation Sans" fill="#000000" font-weight="bold" textLength="58.5" lengthAdjust="spacingAndGlyphs" text-anchor="start" >Region</text>
<text x="1488.5" y="500" font-size="18" font-family="Liberation Sans" fill="#000000" font-weight="bold" textLength="42" lengthAdjust="spacingAndGlyphs" text-anchor="start" >Sales</text>
<rect x="1870.5" y="446" width="6.5" height="49.5" fill="#b3b3b3" />
<rect x="1445" y="558" width="204" height="2" fill="#dcdcdc" />
<rect x="1680" y="558" width="202" height="2" fill="#dcdcdc" />
<circle cx="1656.5" cy="558.6" r="2.4" fill="#b4b4b4" />
<circle cx="1664" cy="558.6" r="2.4" fill="#b4b4b4" />
<circle cx="1671.6" cy="558.6" r="2.4" fill="#b4b4b4" />
<text x="1444.5" y="613" font-size="18.8" font-family="Liberation Sans" fill="#333333" textLength="280.5" lengthAdjust="spacingAndGlyphs" text-anchor="start" >Drag fields between areas below</text>
<rect x="1445.8" y="637.3" width="208.4" height="110.4" fill="#ffffff" rx="5" stroke="#c6c6c6" stroke-width="1.6" />
<rect x="1674.3" y="637.3" width="206.9" height="110.4" fill="#ffffff" rx="5" stroke="#c6c6c6" stroke-width="1.6" />
<rect x="1445.8" y="768.3" width="208.4" height="110.4" fill="#ffffff" rx="5" stroke="#c6c6c6" stroke-width="1.6" />
<rect x="1674.3" y="768.3" width="206.9" height="110.4" fill="#ffffff" rx="5" stroke="#c6c6c6" stroke-width="1.6" />
<rect x="1453" y="678" width="194" height="2" fill="#c8c8c8" />
<rect x="1681" y="678" width="193" height="2" fill="#c8c8c8" />
<rect x="1453" y="809" width="194" height="2" fill="#c8c8c8" />
<rect x="1681" y="809" width="193" height="2" fill="#c8c8c8" />
<rect x="1458" y="648" width="19" height="3.2" fill="#3d4650" />
<path d="M1458.5,653 L1466,663 V670.5 L1469.5,667.5 V663 L1476.8,653" fill="none" stroke="#3d4650" stroke-width="1.3" />
<text x="1495" y="666" font-size="18.8" font-family="Liberation Sans" fill="#262626" textLength="46.5" lengthAdjust="spacingAndGlyphs" text-anchor="start" >Filters</text>
<rect x="1685" y="649" width="6" height="20" fill="#1b6fb8" />
<rect x="1694.3" y="649" width="1.4" height="20" fill="#86bcd6" />
<rect x="1697.9" y="649" width="1.4" height="20" fill="#86bcd6" />
<rect x="1701.5" y="649" width="1.4" height="20" fill="#86bcd6" />
<rect x="1705.1" y="649" width="1.4" height="20" fill="#86bcd6" />
<text x="1722.5" y="666" font-size="18.8" font-family="Liberation Sans" fill="#262626" textLength="70" lengthAdjust="spacingAndGlyphs" text-anchor="start" >Columns</text>
<text x="1684.5" y="707" font-size="18.8" font-family="Liberation Sans" fill="#262626" textLength="65.5" lengthAdjust="spacingAndGlyphs" text-anchor="start" >Σ Values</text>
<rect x="1457" y="780" width="22" height="7.6" fill="#1b6fb8" />
<rect x="1457" y="790" width="22" height="1.8" fill="#86b8d2" />
<rect x="1457" y="794.1" width="22" height="1.8" fill="#86b8d2" />
<rect x="1457" y="798.2" width="22" height="1.8" fill="#86b8d2" />
<text x="1495" y="797" font-size="18.8" font-family="Liberation Sans" fill="#262626" textLength="41" lengthAdjust="spacingAndGlyphs" text-anchor="start" >Rows</text>
<path d="M1705.6,780.6 V777.8 H1687.4 L1696.6,789.4 L1687.4,801.1 H1705.6 V798.3" fill="none" stroke="#3d4650" stroke-width="1.8" />
<text x="1722.5" y="797" font-size="18.8" font-family="Liberation Sans" fill="#262626" textLength="51" lengthAdjust="spacingAndGlyphs" text-anchor="start" >Values</text>
<rect x="1622" y="813" width="30" height="64" fill="#ececec" />
<path d="M1630.7,827.7H1643L1636.85,822.3Z" fill="#6f6f6f" />
<path d="M1630.7,868H1643L1636.85,873.7Z" fill="#6f6f6f" />
<rect x="1849" y="813" width="30" height="64" fill="#ececec" />
<path d="M1857.7,827.7H1870L1863.85,822.3Z" fill="#6f6f6f" />
<path d="M1857.7,868H1870L1863.85,873.7Z" fill="#6f6f6f" />
<text x="1456.5" y="838" font-size="18.8" font-family="Liberation Sans" fill="#262626" textLength="56" lengthAdjust="spacingAndGlyphs" text-anchor="start" >Region</text>
<text x="1456.5" y="870.5" font-size="18.8" font-family="Liberation Sans" fill="#262626" textLength="95" lengthAdjust="spacingAndGlyphs" text-anchor="start" >Salesperson</text>
<text x="1684.5" y="838" font-size="18.8" font-family="Liberation Sans" fill="#262626" textLength="102" lengthAdjust="spacingAndGlyphs" text-anchor="start" >Sum of Sales</text>
<text x="1684.5" y="870.5" font-size="18.8" font-family="Liberation Sans" fill="#262626" textLength="102.5" lengthAdjust="spacingAndGlyphs" text-anchor="start" >Sum of Units</text>
<rect x="1445.5" y="907" width="18.5" height="18.5" fill="#ffffff" rx="4" stroke="#bdbdbd" stroke-width="1.3" />
<text x="1471" y="922.2" font-size="18.8" font-family="Liberation Sans" fill="#262626" textLength="164.5" lengthAdjust="spacingAndGlyphs" text-anchor="start" >Defer Layout Update</text>
<rect x="1751.3" y="899.3" width="129.5" height="33.5" fill="#ffffff" rx="4" stroke="#c8c8c8" stroke-width="1.5" />
<text x="1788" y="923.6" font-size="18.8" font-family="Liberation Sans" fill="#b1b1b1" textLength="54.5" lengthAdjust="spacingAndGlyphs" text-anchor="start" >Update</text>
<path d="M472.2,359.3 L512.8,324.1 L509,339 L697.6,313.9 L514.8,365.3 L524.3,376.9 Z" fill="#ffffff" stroke="#ffffff" stroke-width="7.5" stroke-linejoin="round" opacity="0.92"/>
<path d="M472.2,359.3 L512.8,324.1 L509,339 L697.6,313.9 L514.8,365.3 L524.3,376.9 Z" fill="#e84b4b" />
<path d="M1728.2,390.1 L1772.3,358.6 L1767.2,373.2 L1839.4,379.2 L1769.4,399.6 L1776.4,412.3 Z" fill="#ffffff" stroke="#ffffff" stroke-width="7.5" stroke-linejoin="round" opacity="0.92"/>
<path d="M1728.2,390.1 L1772.3,358.6 L1767.2,373.2 L1839.4,379.2 L1769.4,399.6 L1776.4,412.3 Z" fill="#e84b4b" />
<path d="M344,940.5 L391.6,914.8 L384.8,927.7 L463.4,941.2 L384,954 L390.9,967.7 Z" fill="#ffffff" stroke="#ffffff" stroke-width="7.5" stroke-linejoin="round" opacity="0.92"/>
<path d="M344,940.5 L391.6,914.8 L384.8,927.7 L463.4,941.2 L384,954 L390.9,967.7 Z" fill="#e84b4b" />
</svg>
</body></html>
